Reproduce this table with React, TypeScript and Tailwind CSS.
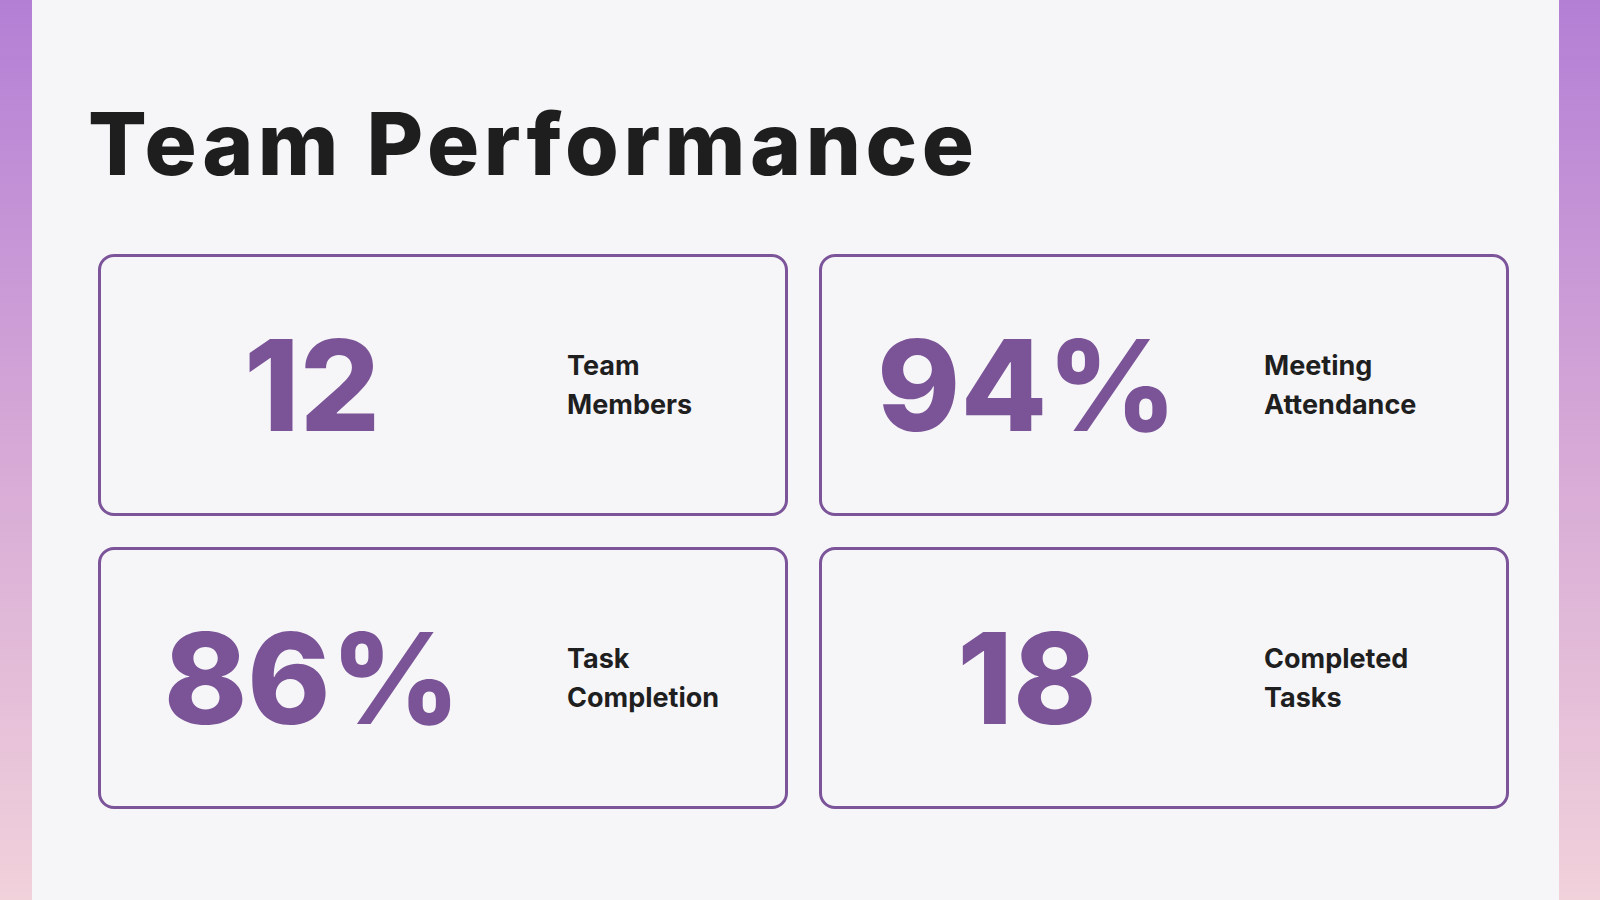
type Stat = {
  value: string;
  label: [string, string];
  numBox: string;
  labelGap: string;
};

const stats: Stat[] = [
  { value: "12", label: ["Team", "Members"], numBox: "ml-[58px] w-[306px]", labelGap: "ml-[102px]" },
  { value: "94%", label: ["Meeting", "Attendance"], numBox: "ml-[52px] w-[306px]", labelGap: "ml-[84px]" },
  { value: "86%", label: ["Task", "Completion"], numBox: "ml-[58px] w-[306px]", labelGap: "ml-[102px]" },
  { value: "18", label: ["Completed", "Tasks"], numBox: "ml-[52px] w-[306px]", labelGap: "ml-[84px]" },
];

const inter = { fontFamily: "Inter, 'Noto Sans', sans-serif" };

function StatCard({ stat }: { stat: Stat }) {
  return (
    <div className="flex h-[262px] items-center rounded-[16px] border-[3px] border-[#7b5499] bg-[#f6f6f9]">
      <div
        className={`${stat.numBox} shrink-0 text-center text-[126px] font-extrabold leading-none tracking-[0px] text-[#7b5497]`}
        style={inter}
      >
        {stat.value}
      </div>
      <div className={`${stat.labelGap} text-[27px] font-bold leading-[39px] text-[#1f1f1f]`} style={inter}>
        <div>{stat.label[0]}</div>
        <div>{stat.label[1]}</div>
      </div>
    </div>
  );
}

export default function App() {
  return (
    <div className="flex h-[900px] w-full bg-gradient-to-b from-[#b37fd5] via-[#d6a9d6] to-[#f1d1da]">
      <div className="ml-[32px] h-full w-[1527px] bg-[#f6f6f9] pl-[56px] pt-[100px]">
        <h1 className="text-[87px] font-extrabold leading-none tracking-[4.5px] text-[#1e1e1e]" style={inter}>
          Team Performance
        </h1>
        <div className="ml-[10px] mt-[67px] grid w-[1411px] grid-cols-2 gap-x-[31px] gap-y-[31px]">
          {stats.map((s) => (
            <StatCard key={s.value} stat={s} />
          ))}
        </div>
      </div>
    </div>
  );
}
